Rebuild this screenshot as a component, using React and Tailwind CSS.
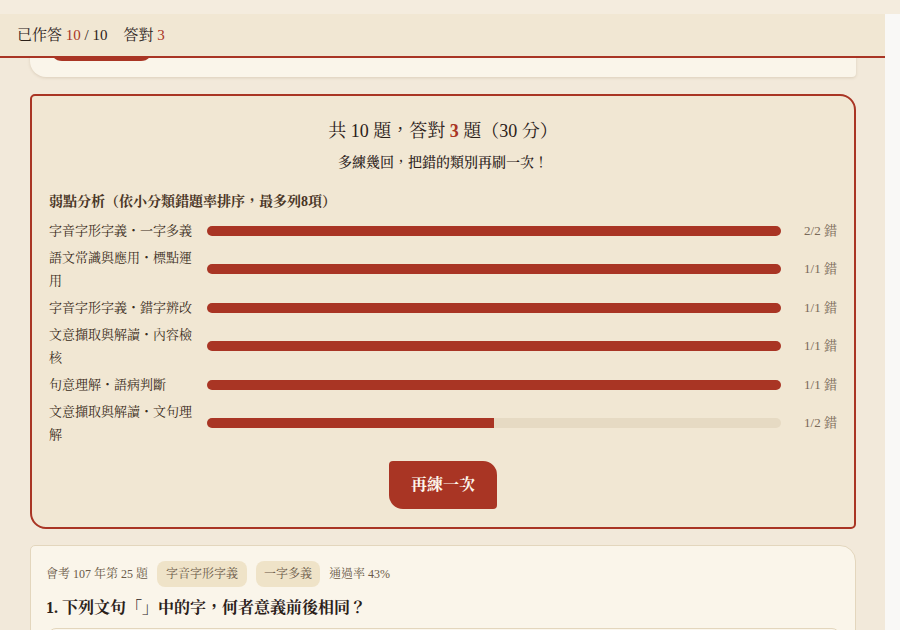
import React from "react";

const weak = [
  { label: "字音字形字義・一字多義", wrong: 2, total: 2 },
  { label: "語文常識與應用・標點運用", wrong: 1, total: 1 },
  { label: "字音字形字義・錯字辨改", wrong: 1, total: 1 },
  { label: "文意擷取與解讀・內容檢核", wrong: 1, total: 1 },
  { label: "句意理解・語病判斷", wrong: 1, total: 1 },
  { label: "文意擷取與解讀・文句理解", wrong: 1, total: 2 },
];

const serif = { fontFamily: '"Liberation Serif", "Noto Serif CJK TC", serif' };

const App = () => {
  return (
    <div className="h-[630px] w-[900px] overflow-hidden bg-[#f4ecde] pt-[14px]" style={serif}>
      <div className="flex h-[616px]">
        <div className="w-[885px] overflow-hidden bg-[#f2e9da]">
          <header className="sticky top-0 z-10 flex h-[44px] items-center border-b-2 border-[#a93524] bg-[#f1e7d3] px-[17px] text-[15px] text-[#2b2119]">
            <span>已作答 <span className="text-[#a93524]">10</span> / 10</span>
            <span className="ml-[16px]">答對 <span className="text-[#a93524]">3</span></span>
          </header>

          <div className="-mt-[44px] flex flex-col pl-[30px] pr-[29px]">
            {/* previous card, mostly hidden under the header */}
            <div className="rounded-tl-sm rounded-tr-2xl rounded-br-sm rounded-bl-2xl bg-[#faf5ea] px-5 pb-4 pt-[7px] shadow-[0_1px_3px_rgba(120,90,50,0.18)]">
              <div className="h-10 w-[103px] rounded-xl bg-[#a93524]" />
            </div>

            {/* results */}
            <div className="mt-[17px] rounded-tl-[5px] rounded-tr-[16px] rounded-br-[5px] rounded-bl-[16px] border-2 border-[#a93524] bg-[#f1e7d3] px-[17px] pb-[18px] pt-[21px]">
              <div className="text-center text-[18px] leading-7 text-[#2b2119]">
                共 10 題，答對 <span className="font-semibold text-[#a93524]">3</span> 題（30 分）
              </div>
              <div className="mt-[6px] text-center text-[14px] font-medium leading-6 text-[#2b2119]">
                多練幾回，把錯的類別再刷一次！
              </div>
              <div className="mt-[15px] text-[14px] font-bold leading-6 text-[#4a3626]">
                弱點分析（依小分類錯題率排序，最多列8項）
              </div>
              <div className="mt-[5px] flex flex-col gap-1">
                {weak.map((w) => (
                  <div key={w.label} className="grid grid-cols-[150px_1fr_48px] items-center gap-x-2">
                    <div className="pr-[4px] text-[13px] leading-[23px] text-[#3a2c20]">{w.label}</div>
                    <div className="h-[10px] overflow-hidden rounded-full bg-[#e6dac3]">
                      <div
                        className="h-full bg-[#a93524]"
                        style={{ width: `${(w.wrong / w.total) * 100}%` }}
                      />
                    </div>
                    <div className="text-right text-[13px] text-[#7a6a58]">
                      {w.wrong}/{w.total} 錯
                    </div>
                  </div>
                ))}
              </div>
              <div className="mt-[15px] flex justify-center">
                <button className="h-12 w-[108px] rounded-tl-[4px] rounded-tr-[14px] rounded-br-[4px] rounded-bl-[14px] bg-[#a93524] text-[16px] font-bold text-[#fdf6ec]">
                  再練一次
                </button>
              </div>
            </div>

            {/* question card */}
            <div className="mt-4 rounded-tl-[5px] rounded-tr-[16px] rounded-br-[5px] rounded-bl-[16px] border border-[#e3d6bd] bg-[#faf5ea] px-[15px] pt-[15px]">
              <div className="flex items-center gap-[9px] text-[12px] text-[#6b5a48]">
                <span>會考 107 年第 25 題</span>
                <span className="rounded-lg bg-[#efe3c8] px-[9px] py-[4px] text-[12px] text-[#6b5a48]">字音字形字義</span>
                <span className="rounded-lg bg-[#efe3c8] px-2 py-[4px] text-[12px] text-[#6b5a48]">一字多義</span>
                <span>通過率 43%</span>
              </div>
              <div className="mt-[7px] text-[16px] font-bold leading-7 text-[#2b2119]">
                1. 下列文句「」中的字，何者意義前後相同？
              </div>
              <div className="mt-[6px] ml-[2px] h-12 rounded-lg border border-[#e3d6bd] bg-[#fbf7ee]" />
            </div>
          </div>
        </div>
        <div className="w-[15px] bg-[#f9f8f6]" />
      </div>
    </div>
  );
};

export default App;
